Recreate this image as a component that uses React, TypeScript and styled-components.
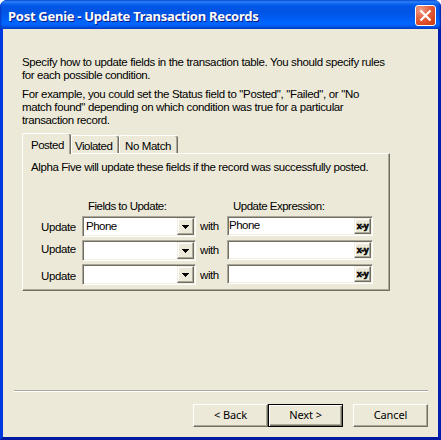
import React from "react";
import styled, { createGlobalStyle, css } from "styled-components";

const face = "#ece9d8";
const shade = "#aca899";
const dark = "#716f64";

const GlobalStyle = createGlobalStyle`
  * { box-sizing: border-box; }
  html, body { margin: 0; background: #fff; }
  button, input { font: inherit; color: inherit; margin: 0; border-radius: 0; }
`;

const Window = styled.main`
  width: 441px;
  height: 440px;
  display: flex;
  flex-direction: column;
  overflow: hidden;
  border-radius: 7px 7px 0 0;
  background: #0a3fe0;
  color: #000;
  font: 11.5px/13px "Liberation Sans", Arial, sans-serif;
  white-space: nowrap;
`;

const TitleBar = styled.header`
  flex: none;
  height: 29px;
  display: flex;
  align-items: flex-start;
  justify-content: space-between;
  padding: 5px 5px 0 8px;
  background: linear-gradient(
    to bottom,
    #0b4fd8 0, #2b83f8 2px, #0b62ee 4px, #0055e4 7px, #0055e5 13px,
    #005cf4 18px, #0066ff 23px, #0062fa 25px, #0046d2 28px, #003cc4 29px
  );
  box-shadow: inset 2px 0 2px -1px #0837c4, inset -2px 0 2px -1px #001ea0;
`;

const Title = styled.h1`
  margin: 1px 0 0;
  color: #fff;
  font: 700 13px/20px "Noto Sans", sans-serif;
  letter-spacing: -0.28px;
  text-shadow: 1px 1px 0 #0a1883;
`;

const CloseButton = styled.button`
  width: 21px;
  height: 21px;
  padding: 0;
  display: grid;
  place-items: center;
  border: 1px solid #fff;
  border-radius: 3px;
  background: radial-gradient(circle at 25% 20%, #f0a08a 0, #e66a4a 35%, #dd4a22 70%, #c63a10 100%);
`;

const Frame = styled.div`
  flex: 1;
  display: flex;
  border: solid;
  border-width: 0 3px 3px;
  border-color: #0044dd #001fae #0019a0 #0038e0;
  background: #0044e8;
`;

const Client = styled.div`
  flex: 1;
  display: flex;
  flex-direction: column;
  background: ${face};
`;

const Intro = styled.section`
  padding: 27px 0 0 19px;
  display: flex;
  flex-direction: column;
  gap: 6px;
`;

const Paragraph = styled.p`
  margin: 0;
`;

const Text = styled.span<{ $track?: number }>`
  letter-spacing: ${(p) => p.$track ?? -0.4}px;
`;

const Tabs = styled.div`
  height: 20px;
  margin: 6px 0 0 19px;
  display: flex;
  align-items: flex-end;
`;

const Tab = styled.button<{ $active?: boolean; $width: number; $inset: number }>`
  width: ${(p) => p.$width}px;
  height: 18px;
  padding: 3px 0 0 ${(p) => p.$inset}px;
  border: 0;
  border-top: 1px solid #fff;
  border-left: 1px solid #fff;
  border-radius: 2px 2px 0 0;
  background: ${face};
  box-shadow: inset -1px 0 ${dark}, inset -2px 0 ${shade};
  text-align: left;
  line-height: 13px;
  display: block;
  ${(p) =>
    p.$active &&
    css`
      height: 21px;
      margin-bottom: -1px;
      z-index: 1;
    `}
`;

const Panel = styled.section`
  width: 368px;
  height: 138px;
  margin-left: 19px;
  padding: 7px 0 0 8px;
  border: 1px solid;
  border-color: #fff ${dark} ${dark} #fff;
  box-shadow: inset -1px -1px ${shade};
`;

const Headings = styled.div`
  display: grid;
  grid-template-columns: 145px auto;
  margin: 26px 0 0 57px;
`;

const Rows = styled.div`
  display: grid;
  row-gap: 3px;
  margin: 3px 0 0 10px;
`;

const Row = styled.div`
  display: grid;
  grid-template-columns: 41px 118px 27px 146px;
  height: 21px;
  align-items: start;
`;

const Label = styled.label<{ $drop: number }>`
  padding-top: ${(p) => p.$drop}px;
`;

const Field = styled.div<{ $combo?: boolean }>`
  width: ${(p) => (p.$combo ? 114 : 146)}px;
  height: ${(p) => (p.$combo ? 21 : 20)}px;
  display: flex;
  border: 1px solid;
  border-color: ${shade} #fff #fff ${shade};
  box-shadow: inset 1px 1px ${dark}, inset -1px -1px #f1efe2;
  background: #fff;
  padding: 1px;
`;

const Value = styled.span<{ $combo?: boolean }>`
  flex: 1;
  padding: ${(p) => (p.$combo ? "2px 0 0 2px" : "1px 0 0 0")};
`;

const FieldButton = styled.button`
  width: 17px;
  align-self: stretch;
  padding: 0;
  display: grid;
  place-items: center;
  border: 1px solid;
  border-color: #f1efe2 ${dark} ${dark} #f1efe2;
  box-shadow: inset -1px -1px ${shade}, inset 1px 1px #fff;
  background: ${face};
`;

const Divider = styled.hr`
  width: 414px;
  height: 2px;
  margin: 99px 0 0 11px;
  border: 0;
  border-top: 1px solid ${shade};
  border-bottom: 1px solid #fff;
`;

const Actions = styled.footer`
  display: flex;
  justify-content: flex-end;
  margin: 12px 10px 0 0;
`;

const ActionButton = styled.button<{ $primary?: boolean; $apart?: boolean }>`
  width: 75px;
  height: 23px;
  margin-left: ${(p) => (p.$apart ? 10 : 0)}px;
  padding: 0 0 1px;
  background: ${face};
  font: 11px/14px "Noto Sans", sans-serif;
  letter-spacing: -0.1px;
  border: 1px solid;
  border-color: #fff ${dark} ${dark} #fff;
  box-shadow: inset -1px -1px ${shade};
  ${(p) =>
    p.$primary &&
    css`
      border-color: #000;
      box-shadow: inset 1px 1px #fff, inset -1px -1px ${dark}, inset -2px -2px ${shade};
    `}
`;

const CloseIcon = () => (
  <svg width="13" height="13" viewBox="0 0 13 13">
    <path d="M1.5 1.5L11.5 11.5M11.5 1.5L1.5 11.5" stroke="#fff" strokeWidth="2.2" />
  </svg>
);

const ArrowIcon = () => (
  <svg width="7" height="4" viewBox="0 0 7 4" shapeRendering="crispEdges">
    <path d="M0 0H7V1H6V2H5V3H4V4H3V3H2V2H1V1H0Z" />
  </svg>
);

const Formula = styled.span`
  font: 700 9px/9px "Liberation Sans", Arial, sans-serif;
  letter-spacing: -0.5px;
  -webkit-text-stroke: 0.6px #000;
`;

const rows = [
  { value: "Phone", first: 5, second: 4 },
  { value: "", first: 3, second: 4 },
  { value: "", first: 6, second: 5 },
];

export default function App() {
  return (
    <Window>
      <GlobalStyle />
      <TitleBar>
        <Title>Post Genie - Update Transaction Records</Title>
        <CloseButton aria-label="Close"><CloseIcon /></CloseButton>
      </TitleBar>
      <Frame>
        <Client>
          <Intro>
            <Paragraph>
              <Text $track={-0.37}>Specify how to update fields in the transaction table. You should specify rules</Text><br />
              <Text>for each possible condition.</Text>
            </Paragraph>
            <Paragraph>
              <Text $track={-0.34}>For example, you could set the Status field to "Posted", "Failed", or "No</Text><br />
              <Text $track={-0.36}>match found" depending on which condition was true for a particular</Text><br />
              <Text>transaction record.</Text>
            </Paragraph>
          </Intro>
          <Tabs>
            <Tab $active $width={49} $inset={8}><Text $track={-0.5}>Posted</Text></Tab>
            <Tab $width={48} $inset={3}><Text $track={-0.5}>Violated</Text></Tab>
            <Tab $width={59} $inset={5}><Text>No Match</Text></Tab>
          </Tabs>
          <Panel>
            <Text>Alpha Five will update these fields if the record was successfully posted.</Text>
            <Headings>
              <Text $track={-0.5}>Fields to Update:</Text>
              <Text $track={-0.5}>Update Expression:</Text>
            </Headings>
            <Rows>
              {rows.map((row, i) => (
                <Row key={i}>
                  <Label $drop={row.first}><Text>Update</Text></Label>
                  <Field $combo>
                    <Value $combo><Text $track={-0.5}>{row.value}</Text></Value>
                    <FieldButton aria-label="Choose field"><ArrowIcon /></FieldButton>
                  </Field>
                  <Label $drop={row.second}><Text>with</Text></Label>
                  <Field>
                    <Value><Text $track={-0.5}>{row.value}</Text></Value>
                    <FieldButton><Formula>x-y</Formula></FieldButton>
                  </Field>
                </Row>
              ))}
            </Rows>
          </Panel>
          <Divider />
          <Actions>
            <ActionButton>&lt; Back</ActionButton>
            <ActionButton $primary>Next &gt;</ActionButton>
            <ActionButton $apart>Cancel</ActionButton>
          </Actions>
        </Client>
      </Frame>
    </Window>
  );
}
